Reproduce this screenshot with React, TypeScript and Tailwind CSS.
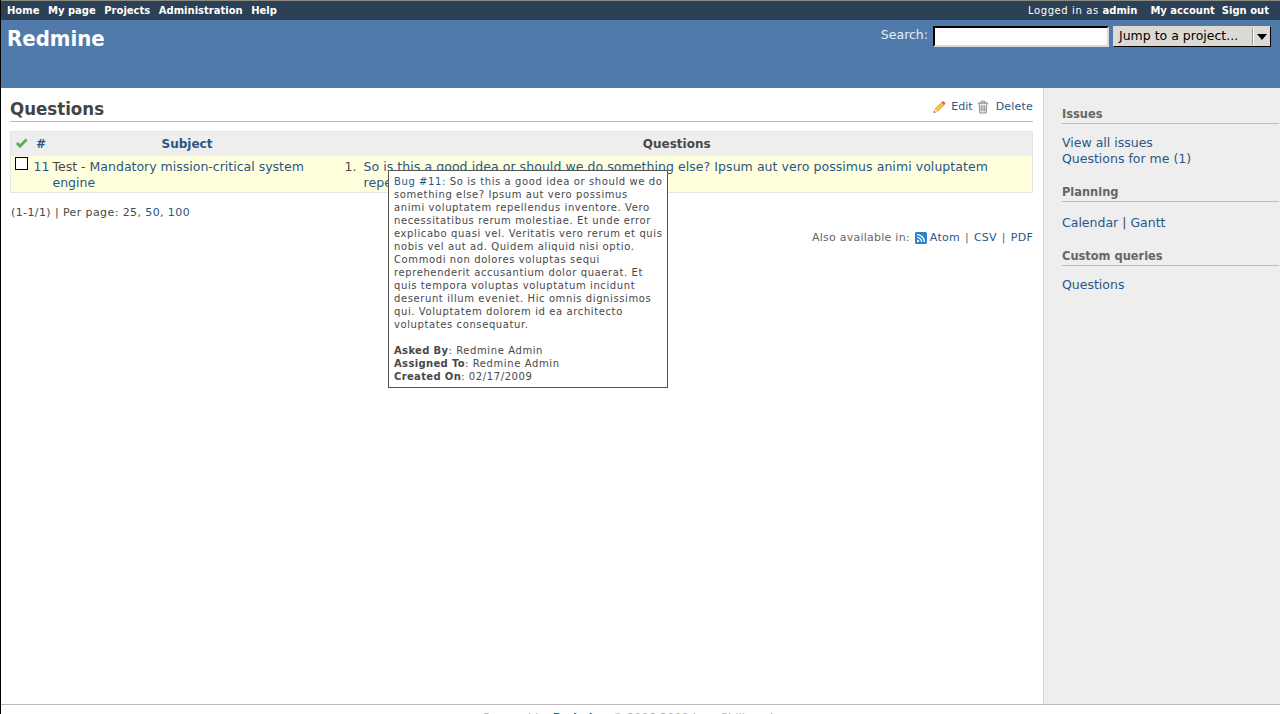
import React from 'react';

const linkCls = 'text-[#2a5685]';
const titleFont = "font-['DejaVu_Sans_Condensed','DejaVu_Sans',sans-serif]";

// small hand drawn silk style icons
function PencilIcon() {
  return (
    <svg width="13" height="14" viewBox="0 0 16 16" className="shrink-0">
      <path d="M1 15l1.4-4.6L10.6 2.2l3.2 3.2-8.2 8.2z" fill="#f7c04a" stroke="#d9912a" strokeWidth="0.8" />
      <path d="M10.6 2.2l1-1c.5-.5 1.2-.5 1.7 0l1.5 1.5c.5.5.5 1.2 0 1.7l-1 1z" fill="#e2574c" />
      <path d="M1 15l1.4-4.6 3.2 3.2z" fill="#fbe8c8" />
      <path d="M1 15l.6-2 1.4 1.4z" fill="#444" />
    </svg>
  );
}

function TrashIcon() {
  return (
    <svg width="12" height="14" viewBox="0 0 14 16" className="shrink-0" fill="none" stroke="#85858f" strokeWidth="1.1">
      <path d="M1 3.5h12M5 3.5V1.2h4v2.3" />
      <path d="M2.5 3.5l.7 11.5h7.6l.7-11.5z" fill="#f0f0f2" />
      <path d="M5 6v7M7 6v7M9 6v7" />
    </svg>
  );
}

function CheckIcon() {
  return (
    <svg width="13" height="11" viewBox="0 0 13 11">
      <path d="M1 6l1.8-1.8L5 6.2 10.6.8 12.4 2.6 5 10z" fill="#5dab4f" stroke="#8ac57f" strokeWidth="0.6" />
    </svg>
  );
}

function FeedIcon() {
  return (
    <svg width="12" height="12" viewBox="0 0 12 12" className="shrink-0">
      <rect width="12" height="12" rx="1.5" fill="#2d82c7" />
      <circle cx="3" cy="9" r="1.2" fill="#fff" />
      <path d="M2 5.4A4.6 4.6 0 0 1 6.6 10M2 2.6A7.4 7.4 0 0 1 9.4 10" fill="none" stroke="#fff" strokeWidth="1.3" />
    </svg>
  );
}

function SidebarHeading({ children }: { children: React.ReactNode }) {
  return (
    <h3 className={`h-[19px] border-b border-[#bbbbbb] text-[12.7px] leading-[17px] font-bold text-[#666666] ${titleFont}`}>
      {children}
    </h3>
  );
}

export default function App() {
  return (
    <div className="relative flex h-[714px] flex-col overflow-hidden border-l border-black bg-white font-['DejaVu_Sans',sans-serif] text-[12px] text-[#484848]">
      {/* top menu */}
      <div className="flex h-[20px] shrink-0 items-center justify-between border-t border-[#8a8a80] bg-[#2c4056] pr-[11px] pb-[1px] pl-[6px] text-[10px] font-bold text-white">
        <div className="flex gap-[8.5px]">
          <span>Home</span>
          <span>My page</span>
          <span>Projects</span>
          <span>Administration</span>
          <span>Help</span>
        </div>
        <div className="flex">
          <span className="mr-[13px] font-normal tracking-[0.6px]">
            Logged in as <b className="tracking-normal">admin</b>
          </span>
          <span className="mr-[7px]">My account</span>
          <span>Sign out</span>
        </div>
      </div>

      {/* header */}
      <div className="flex h-[68px] shrink-0 items-start justify-between bg-[#507aaa] pr-[9px] pl-[6px] text-white">
        <h1 className={`mt-[3px] text-[22px] leading-[32px] font-bold ${titleFont}`}>Redmine</h1>
        <div className="mt-[6px] flex items-center">
          <span className="mr-[5px] -translate-y-[1px] text-[12.5px] text-[#e6edf5]">Search:</span>
          <input className="mr-[4px] h-[21px] w-[176px] border-2 border-[#dcdad5] border-t-black border-l-black bg-white" />
          <div className="flex h-[21px] w-[158px] items-center justify-between border border-[#dcdad5] border-r-black border-b-black bg-[#dcdad5] pl-[5px] text-[12.5px] text-black">
            <span>Jump to a project...</span>
            <span className="flex h-[17px] w-[18px] items-center justify-center border-l border-[#999] shadow-[inset_1px_0_0_#fff]">
              <span className="h-0 w-0 border-x-[5px] border-t-[6px] border-x-transparent border-t-black" />
            </span>
          </div>
        </div>
      </div>

      {/* main */}
      <div className="flex min-h-0 flex-1">
        <div className="relative min-w-0 flex-1 pt-[8px] pr-[10px] pl-[9px]">
          <div className="flex h-[26px] items-start justify-between border-b border-[#bbbbbb]">
            <h2 className={`text-[18.5px] leading-[25px] font-bold text-[#444444] ${titleFont}`}>Questions</h2>
            <div className="mt-[3px] flex items-center text-[11px] leading-[16px]">
              <PencilIcon />
              <span className={`ml-[5px] ${linkCls}`}>Edit</span>
              <span className="ml-[4px]"><TrashIcon /></span>
              <span className={`ml-[7px] tracking-[0.2px] ${linkCls}`}>Delete</span>
            </div>
          </div>

          <table className="mt-[9px] w-full table-fixed border border-[#e4e4e4] border-collapse">
            <colgroup>
              <col className="w-[21px]" />
              <col className="w-[21px]" />
              <col className="w-[269px]" />
              <col />
            </colgroup>
            <thead>
              <tr className="h-[24px] bg-[#eeeeee] font-bold">
                <th className="pl-[4px] text-left"><CheckIcon /></th>
                <th className={`pr-[2px] text-center ${linkCls}`}>#</th>
                <th className={linkCls}>Subject</th>
                <th className="text-[#484848]">Questions</th>
              </tr>
            </thead>
            <tbody>
              <tr className="h-[37px] bg-[#ffffdd] align-top text-[12.5px] leading-[16px]">
                <td className="pt-[1px] pl-[4px]">
                  <span className="block h-[13px] w-[13px] border border-black bg-white" />
                </td>
                <td className={`pt-[3px] pl-[2px] ${linkCls}`}>11</td>
                <td className="pt-[3px]">
                  Test - <span className={linkCls}>Mandatory mission-critical system engine</span>
                </td>
                <td className="pt-[3px] pr-[10px] pl-[23px]">
                  <div className="flex">
                    <span className="w-[19px] shrink-0">1.</span>
                    <span className={`tracking-[0.06px] ${linkCls}`}>
                      So is this a good idea or should we do something else? Ipsum aut vero possimus animi voluptatem repellendus inventore
                    </span>
                  </div>
                </td>
              </tr>
            </tbody>
          </table>

          <p className="mt-[12px] pl-[1px] text-[11px] leading-[16px] tracking-[0.4px]">
            (1-1/1) | Per page: 25, <span className={linkCls}>50</span>, <span className={linkCls}>100</span>
          </p>

          <div className="mt-[9px] flex items-center justify-end text-[11px] leading-[16px] tracking-[0.25px] text-[#666666]">
            <span className="mr-[5px]">Also available in:</span>
            <FeedIcon />
            <span className={`ml-[3px] ${linkCls}`}>Atom</span>
            <span className="mx-[5px]">|</span>
            <span className={linkCls}>CSV</span>
            <span className="mx-[5px]">|</span>
            <span className={linkCls}>PDF</span>
          </div>

          {/* hover tooltip */}
          <div className="absolute top-[82px] left-[387px] h-[218px] w-[280px] border border-[#555555] bg-white pt-[4px] pr-[2px] pl-[5px] text-[10px] leading-[13px] tracking-[0.6px] text-[#484848]">
            <p>
              <span className={linkCls}>Bug #11</span>: So is this a good idea or should we do something else? Ipsum aut vero possimus<br />animi voluptatem repellendus inventore. Vero necessitatibus rerum molestiae. Et unde error explicabo quasi vel. Veritatis vero rerum et quis nobis vel aut ad. Quidem aliquid nisi optio. Commodi non dolores voluptas sequi reprehenderit accusantium dolor quaerat. Et quis tempora voluptas voluptatum incidunt deserunt illum eveniet. Hic omnis dignissimos qui. Voluptatem dolorem id ea architecto voluptates consequatur.
            </p>
            <p className="mt-[13px]"><b className="tracking-[0.35px]">Asked By</b>: Redmine Admin</p>
            <p><b className="tracking-[0.35px]">Assigned To</b>: Redmine Admin</p>
            <p><b className="tracking-[0.35px]">Created On</b>: 02/17/2009</p>
          </div>
        </div>

        {/* sidebar */}
        <div className="w-[237px] shrink-0 border-l border-[#d5d5d5] bg-[#eeeeee] pt-[17px] pr-[1px] pl-[18px] text-[12.5px] leading-[16px]">
          <SidebarHeading>Issues</SidebarHeading>
          <div className={`mt-[11px] ${linkCls}`}>
            <div>View all issues</div>
            <div>Questions for me (1)</div>
          </div>
          <div className="mt-[16px]"><SidebarHeading>Planning</SidebarHeading></div>
          <div className="mt-[13px]">
            <span className={linkCls}>Calendar</span> | <span className={linkCls}>Gantt</span>
          </div>
          <div className="mt-[16px]"><SidebarHeading>Custom queries</SidebarHeading></div>
          <div className={`mt-[11px] ${linkCls}`}>Questions</div>
        </div>
      </div>

      {/* footer, cut off by the window */}
      <div className="h-[10px] shrink-0 border-t border-[#bbbbbb] bg-white pt-[5px] text-center text-[11px] leading-[16px] tracking-[0.2px] text-[#aaaaaa]">
        Powered by <span className="font-bold text-[#2a5685]">Redmine</span> © 2006-2009 Jean-Philippe Lang
      </div>
    </div>
  );
}
